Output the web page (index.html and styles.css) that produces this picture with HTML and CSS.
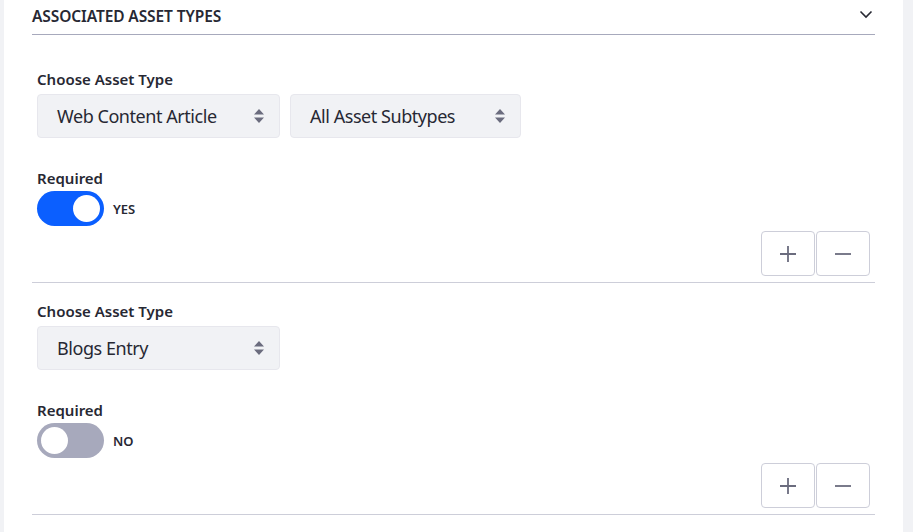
FILE: index.html
```html
<!DOCTYPE html>
<html>
<head>
<meta charset="utf-8">
<link rel="stylesheet" href="styles.css">
</head>
<body>
<div class="panel">
  <div class="panel-header">
    <span class="panel-title">ASSOCIATED ASSET TYPES</span>
    <svg class="chevron" width="14" height="14" viewBox="0 0 14 14"><path d="M1.5 4.5 L7 10 L12.5 4.5" fill="none" stroke="#272833" stroke-width="1.6"/></svg>
  </div>

  <div class="block first">
    <label class="field-label">Choose Asset Type</label>
    <div class="selects">
      <div class="select wide"><span>Web Content Article</span><svg class="updown" width="10" height="16" viewBox="0 0 10 16"><path d="M5 1 L10 6.5 H0 Z M5 15 L10 9.5 H0 Z" fill="#6b6c7e"/></svg></div>
      <div class="select wide2"><span>All Asset Subtypes</span><svg class="updown" width="10" height="16" viewBox="0 0 10 16"><path d="M5 1 L10 6.5 H0 Z M5 15 L10 9.5 H0 Z" fill="#6b6c7e"/></svg></div>
    </div>
    <label class="field-label req">Required</label>
    <div class="toggle-row">
      <span class="toggle on"><span class="knob"></span></span>
      <span class="toggle-text">YES</span>
    </div>
    <div class="actions">
      <button class="btn"><svg width="20" height="20" viewBox="0 0 20 20"><path d="M10 2 V18 M2 10 H18" stroke="#6b6c7e" stroke-width="1.8"/></svg></button>
      <button class="btn"><svg width="20" height="20" viewBox="0 0 20 20"><path d="M2 10 H18" stroke="#6b6c7e" stroke-width="1.8"/></svg></button>
    </div>
  </div>

  <div class="block">
    <label class="field-label">Choose Asset Type</label>
    <div class="selects">
      <div class="select wide"><span>Blogs Entry</span><svg class="updown" width="10" height="16" viewBox="0 0 10 16"><path d="M5 1 L10 6.5 H0 Z M5 15 L10 9.5 H0 Z" fill="#6b6c7e"/></svg></div>
    </div>
    <label class="field-label req">Required</label>
    <div class="toggle-row">
      <span class="toggle off"><span class="knob"></span></span>
      <span class="toggle-text">NO</span>
    </div>
    <div class="actions">
      <button class="btn"><svg width="20" height="20" viewBox="0 0 20 20"><path d="M10 2 V18 M2 10 H18" stroke="#6b6c7e" stroke-width="1.8"/></svg></button>
      <button class="btn"><svg width="20" height="20" viewBox="0 0 20 20"><path d="M2 10 H18" stroke="#6b6c7e" stroke-width="1.8"/></svg></button>
    </div>
  </div>
</div>
</body>
</html>
```

FILE: styles.css
```css
html, body {
  margin: 0;
  padding: 0;
  background: #f1f2f5;
  height: 532px;
  overflow: hidden;
}
body {
  font-family: "Noto Sans", "Open Sans", sans-serif;
  color: #272833;
}
.panel {
  background: #fff;
  margin: 0 10px 0 4px;
  padding: 0 28px;
  height: 532px;
}
.panel-header {
  height: 35px;
  border-bottom: 1px solid #a7a9bc;
  display: flex;
  align-items: center;
  justify-content: space-between;
  box-sizing: border-box;
  padding-bottom: 3px;
}
.panel-title {
  font-size: 15.5px;
  font-weight: 600;
  letter-spacing: -0.1px;
}
.chevron {
  margin-right: 2px;
  margin-top: -4px;
}
.block {
  border-bottom: 1px solid #cdced9;
  padding: 18px 5px 6px 5px;
}
.block.first {
  padding-top: 34px;
}
.field-label {
  display: block;
  font-size: 15px;
  font-weight: 600;
  line-height: 20px;
  margin-bottom: 5px;
}
.selects {
  display: flex;
  gap: 10px;
}
.select {
  height: 44px;
  box-sizing: border-box;
  background: #f1f2f5;
  border: 1px solid #e7e7ed;
  border-radius: 4px;
  display: flex;
  align-items: center;
  justify-content: space-between;
  padding: 0 15px 0 19px;
  font-size: 18px;
  letter-spacing: -0.45px;
}
.select.wide { width: 243px; }
.select.wide2 { width: 231px; }
.req {
  margin-top: 30px;
  margin-bottom: 3px;
}
.toggle-row {
  display: flex;
  align-items: center;
  gap: 9px;
}
.toggle {
  width: 67px;
  height: 35px;
  border-radius: 18px;
  box-sizing: border-box;
  position: relative;
  display: inline-block;
}
.toggle.on { background: #0b5fff; }
.toggle.off { background: #a7a9bc; }
.knob {
  position: absolute;
  top: 4px;
  width: 27px;
  height: 27px;
  border-radius: 50%;
  background: #fff;
}
.toggle.on .knob { right: 4px; }
.toggle.off .knob { left: 4px; }
.toggle-text {
  font-size: 13px;
  font-weight: 600;
}
.actions {
  display: flex;
  justify-content: flex-end;
  gap: 1px;
  margin-top: 5px;
}
.btn {
  width: 54px;
  height: 45px;
  box-sizing: border-box;
  background: #fff;
  border: 1px solid #cdced9;
  border-radius: 4px;
  display: flex;
  align-items: center;
  justify-content: center;
  padding: 0;
}
```
